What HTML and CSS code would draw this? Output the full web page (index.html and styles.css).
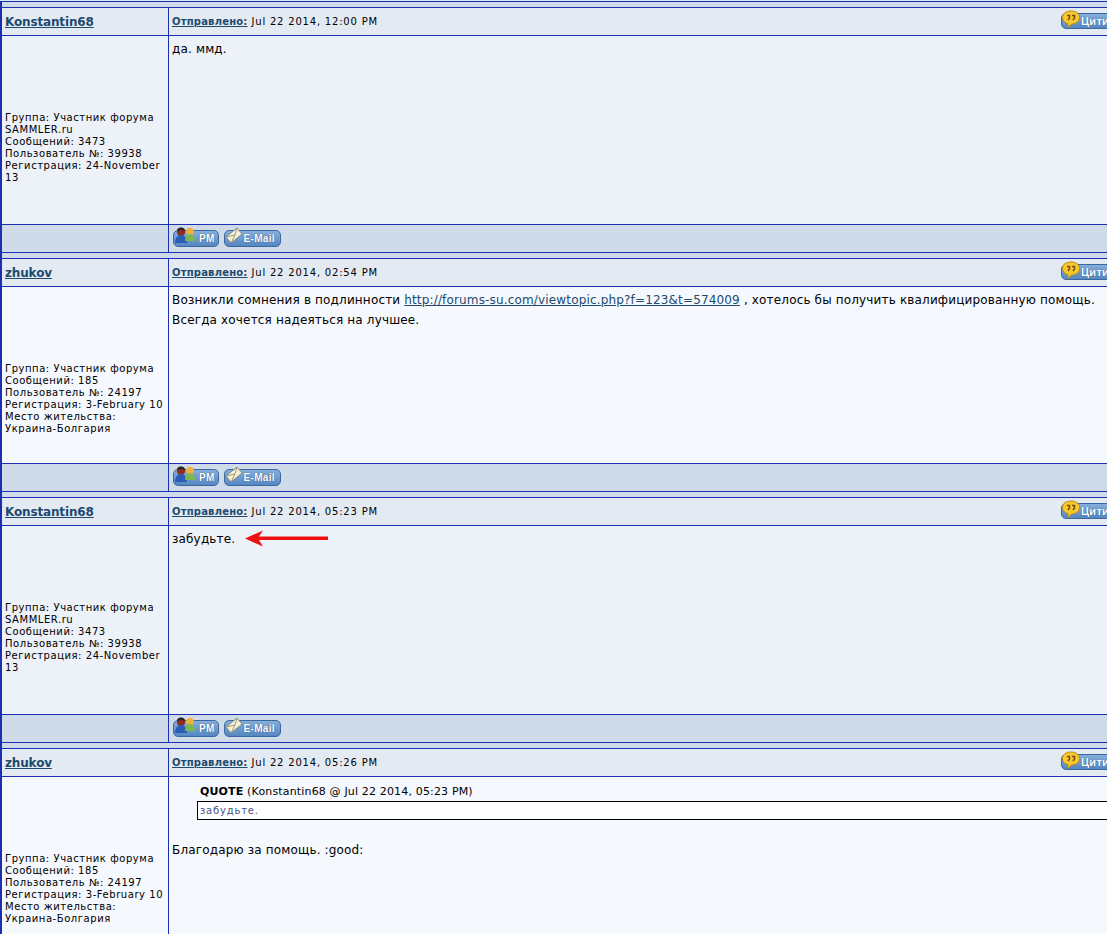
FILE: index.html
```html
<!DOCTYPE html>
<html lang="ru">
<head>
<meta charset="utf-8">
<title>Forum topic</title>
<link rel="stylesheet" href="styles.css">
</head>
<body>
<svg class="defs" width="0" height="0" aria-hidden="true">
  <defs>
    <symbol id="i-pm" viewBox="0 0 22 18">
      <circle cx="7" cy="5" r="4.200" fill="#8f2f22"/>
      <path d="M3 4a4 3.500 0 0 1 8 0l-4-1z" fill="#2c2420"/>
      <path d="M1 16c0-5 2.500-8 6-8s6 3 6 8z" fill="#2a5cb8"/>
      <circle cx="16" cy="4.500" r="3.800" fill="#f2b33c"/>
      <path d="M11 14c0-4 2-7 5-7s5 3 5 7z" fill="#7cb84e"/>
    </symbol>
    <symbol id="i-mail" viewBox="0 0 18 18">
      <path d="M1 10 12 1l5 6-11 9z" fill="#f6f1d6" stroke="#8a8a70" stroke-width="1"/>
      <path d="M1 10l9-2 2-7M10 8l-4 8" fill="none" stroke="#9a9a80" stroke-width="1"/>
    </symbol>
    <symbol id="i-quote" viewBox="0 0 18 18">
      <path d="M9 1c5 0 8.500 2.500 8.500 6.500S14 14 9.500 14L6 17.500V13.500C2.500 13 .5 10.500 .5 7.500 .5 3.500 4 1 9 1z" fill="#f6c92e" stroke="#c08a10" stroke-width="1"/>
      <path d="M5 5.500h2.500v2.500L6 10M10 5.500h2.500v2.500L11 10" fill="none" stroke="#7a4a10" stroke-width="1.500"/>
    </symbol>
  </defs>
</svg>
<main class="topic">
  <div class="gap"></div>

  <article class="post odd h-a">
    <div class="cell head who"><a class="name" href="#">Konstantin68</a></div>
    <div class="cell head meta"><a class="posted" href="#">Отправлено:</a> Jul 22 2014, 12:00 PM<a class="btn quote" href="#"><svg class="ic ic-quote"><use href="#i-quote"/></svg>Цитировать</a></div>
    <div class="cell info">Группа: Участник форума SAMMLER.ru<br>Сообщений: 3473<br>Пользователь №: 39938<br>Регистрация: 24-November 13</div>
    <div class="cell text"><p>да. ммд.</p></div>
    <div class="cell foot"></div>
    <div class="cell foot tools"><a class="btn btn-pm" href="#"><svg class="ic ic-pm"><use href="#i-pm"/></svg>PM</a><a class="btn btn-mail" href="#"><svg class="ic ic-mail"><use href="#i-mail"/></svg>E-Mail</a></div>
  </article>
  <div class="gap"></div>

  <article class="post even h-b">
    <div class="cell head who"><a class="name" href="#">zhukov</a></div>
    <div class="cell head meta"><a class="posted" href="#">Отправлено:</a> Jul 22 2014, 02:54 PM<a class="btn quote" href="#"><svg class="ic ic-quote"><use href="#i-quote"/></svg>Цитировать</a></div>
    <div class="cell info">Группа: Участник форума<br>Сообщений: 185<br>Пользователь №: 24197<br>Регистрация: 3-February 10<br>Место жительства:<br>Украина-Болгария</div>
    <div class="cell text"><p>Возникли сомнения в подлинности <a href="#">http://forums-su.com/viewtopic.php?f=123&amp;t=574009</a> , хотелось бы получить квалифицированную помощь.<br>Всегда хочется надеяться на лучшее.</p></div>
    <div class="cell foot"></div>
    <div class="cell foot tools"><a class="btn btn-pm" href="#"><svg class="ic ic-pm"><use href="#i-pm"/></svg>PM</a><a class="btn btn-mail" href="#"><svg class="ic ic-mail"><use href="#i-mail"/></svg>E-Mail</a></div>
  </article>
  <div class="gap"></div>

  <article class="post odd h-a">
    <div class="cell head who"><a class="name" href="#">Konstantin68</a></div>
    <div class="cell head meta"><a class="posted" href="#">Отправлено:</a> Jul 22 2014, 05:23 PM<a class="btn quote" href="#"><svg class="ic ic-quote"><use href="#i-quote"/></svg>Цитировать</a></div>
    <div class="cell info">Группа: Участник форума SAMMLER.ru<br>Сообщений: 3473<br>Пользователь №: 39938<br>Регистрация: 24-November 13</div>
    <div class="cell text"><p>забудьте.</p>
      <svg class="arrow" width="86" height="17" viewBox="0 0 86 17"><path d="M2 8.500 20 .5 16 6.500H85V10H16L20 16.500z" fill="#ee1111"/></svg>
    </div>
    <div class="cell foot"></div>
    <div class="cell foot tools"><a class="btn btn-pm" href="#"><svg class="ic ic-pm"><use href="#i-pm"/></svg>PM</a><a class="btn btn-mail" href="#"><svg class="ic ic-mail"><use href="#i-mail"/></svg>E-Mail</a></div>
  </article>
  <div class="gap"></div>

  <article class="post even h-b">
    <div class="cell head who"><a class="name" href="#">zhukov</a></div>
    <div class="cell head meta"><a class="posted" href="#">Отправлено:</a> Jul 22 2014, 05:26 PM<a class="btn quote" href="#"><svg class="ic ic-quote"><use href="#i-quote"/></svg>Цитировать</a></div>
    <div class="cell info">Группа: Участник форума<br>Сообщений: 185<br>Пользователь №: 24197<br>Регистрация: 3-February 10<br>Место жительства:<br>Украина-Болгария</div>
    <div class="cell text">
      <div class="qtitle"><b>QUOTE</b> (Konstantin68 @ Jul 22 2014, 05:23 PM)</div>
      <div class="qbody">забудьте.</div>
      <p class="after">Благодарю за помощь. :good:</p>
    </div>
    <div class="cell foot"></div>
    <div class="cell foot tools"></div>
  </article>
</main>
</body>
</html>
```
FILE: styles.css
```css
html, body { margin: 0; padding: 0; }
body {
  width: 1107px;
  height: 934px;
  overflow: hidden;
  background: #fff;
  font-family: "DejaVu Sans", Verdana, sans-serif;
  font-size: 10px;
  color: #000;
}
.defs { position: absolute; }
.topic {
  width: 1400px;
  background: #1b2fb0;
  border-top: 1px solid #dbe3ef;
  display: flex;
  flex-direction: column;
  padding-left: 2px;
}
.gap {
  height: 5px;
  background: #cfdaea;
  border-top: 1px solid #1b2fb0;
  border-bottom: 1px solid #1b2fb0;
}
.post {
  display: grid;
  grid-template-columns: 166px 1fr;
  column-gap: 1px;
  row-gap: 1px;
}
.h-a { grid-template-rows: 27px 188px 27px; }
.h-b { grid-template-rows: 27px 176px 27px; }
.cell { min-width: 0; }
.head {
  background: #e4eaf2;
  display: flex;
  align-items: center;
  padding-left: 3px;
}
.meta { position: relative; white-space: pre; letter-spacing: .8px; }
.name { font-size: 12px; font-weight: bold; color: #1d4a6e; letter-spacing: -.15px; }
.posted { font-weight: bold; color: #1d4a6e; letter-spacing: .2px; }
.info {
  padding: 76px 3px 0;
  line-height: 12px;
  letter-spacing: .55px;
}
.text {
  font-size: 12px;
  line-height: 20px;
  letter-spacing: .16px;
  padding: 3px 3px 0;
  position: relative;
}
.text p { margin: 0; }
.text a { color: #1d4a6e; text-decoration: underline; }
.odd .info, .odd .text { background: #edf1f8; }
.even .info, .even .text { background: #f5f8fd; }
.foot {
  background: #d0dbea;
  display: flex;
  align-items: center;
  gap: 5px;
  padding-left: 4px;
}
.btn {
  display: inline-flex;
  align-items: center;
  box-sizing: border-box;
  height: 17px;
  border: 1px solid #3a69a2;
  border-radius: 5px;
  background: linear-gradient(#86aedb, #5687c2);
  color: #fff;
  font-family: "Liberation Sans", Arial, sans-serif;
  font-size: 10px;
  font-weight: bold;
  letter-spacing: .3px;
  text-decoration: none;
  text-shadow: 0 0 1px #1f3553;
}
.btn-pm { padding-right: 3px; }
.btn-mail { padding-right: 5px; }
.ic { height: 18px; margin-top: -5px; flex: none; }
.ic-pm { width: 22px; margin-right: 3px; }
.ic-mail { width: 18px; margin-right: 1px; }
.ic-quote { width: 18px; margin-right: 1px; }
.quote {
  position: absolute;
  left: 892px;
  top: 5px;
  height: 16px;
  font-size: 11px;
}
.arrow { position: absolute; left: 74px; top: 4px; }
.qtitle { font-size: 11px; line-height: 14px; padding-left: 28px; margin-top: 5px; }
.qbody {
  margin: 2px 0 0 25px;
  height: 17px;
  border: 1px solid #000;
  background: #fff;
  padding-left: 2px;
  font-size: 10px;
  line-height: 17px;
  color: #465584;
  letter-spacing: .8px;
}
.text .after { margin-top: 20px; }
```
